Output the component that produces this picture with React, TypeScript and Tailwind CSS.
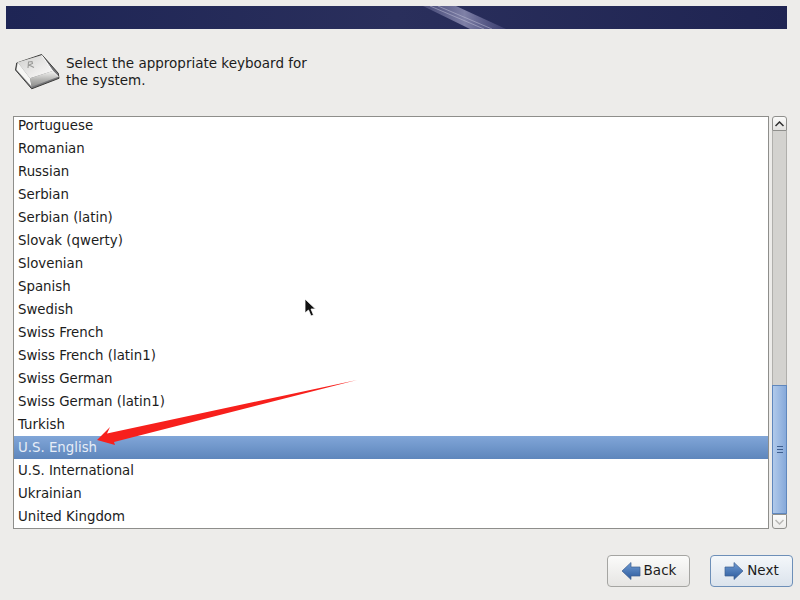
import React from 'react';

const layouts = [
  'Portuguese', 'Romanian', 'Russian', 'Serbian', 'Serbian (latin)', 'Slovak (qwerty)',
  'Slovenian', 'Spanish', 'Swedish', 'Swiss French', 'Swiss French (latin1)', 'Swiss German',
  'Swiss German (latin1)', 'Turkish', 'U.S. English', 'U.S. International', 'Ukrainian', 'United Kingdom',
];

const KeyIcon = () => (
  <svg width="46" height="36" viewBox="0 0 46 36" className="shrink-0">
    <defs>
      <linearGradient id="keyTop" x1="0" y1="0" x2="1" y2="1">
        <stop offset="0" stopColor="#cfcfcd" />
        <stop offset="0.6" stopColor="#ecebea" />
        <stop offset="1" stopColor="#fbfbfa" />
      </linearGradient>
      <linearGradient id="keyFront" x1="0" y1="0" x2="0" y2="1">
        <stop offset="0" stopColor="#f4f4f2" />
        <stop offset="0.55" stopColor="#b4b4b2" />
        <stop offset="1" stopColor="#8e8e8c" />
      </linearGradient>
    </defs>
    <path d="M1.7 9 L26.7 0.5 L43.3 19.3 L44 24.3 L16.7 34.8 L0.5 16 Z" fill="#77777a" stroke="#3c3c3a" strokeWidth="1" strokeLinejoin="round" />
    <path d="M2.7 8.2 L26.7 1.2 L37.7 17 L15 24.3 Z" fill="url(#keyTop)" />
    <path d="M2.7 8.2 L15 24.3 L16.7 32.7 L1.5 15.7 Z" fill="#f6f6f4" />
    <path d="M15 24.3 L37.7 17 L43.3 22.7 L16.7 32.7 Z" fill="url(#keyFront)" />
    <path d="M26.7 1.2 L37.7 17 L43.3 22.7" fill="none" stroke="#fff" strokeWidth="1" />
    <path d="M13 14 L13.5 8 L17 7.5 L17.5 9.5 L14 11 L19 13.5" fill="none" stroke="#9a9a98" strokeWidth="1.1" />
  </svg>
);

const NavArrow = ({ flip }: { flip?: boolean }) => (
  <svg width="20" height="20" viewBox="0 0 20 20" className={flip ? '-scale-x-100' : ''}>
    <defs>
      <linearGradient id={flip ? 'arrowN' : 'arrowB'} x1="0" y1="0" x2="0" y2="1">
        <stop offset="0" stopColor="#6f9bd3" />
        <stop offset="1" stopColor="#2c5a9c" />
      </linearGradient>
    </defs>
    <path d="M1 10 L10 1.5 L10 6 L19 6 L19 15 L10 15 L10 18.5 Z" fill={`url(#${flip ? 'arrowN' : 'arrowB'})`} stroke="#3d5f8f" strokeWidth="0.7" strokeLinejoin="round" />
  </svg>
);

const Scrollbar = () => (
  <div className="w-[15px] h-[413px] flex flex-col shrink-0">
    <div className="h-[15px] rounded-t-[3px] border border-[#8f8f8c] bg-gradient-to-b from-[#fbfbfa] to-[#e2e1df] flex items-center justify-center">
      <svg width="9" height="6" viewBox="0 0 9 6">
        <path d="M0.5 5 L4.5 1 L8.5 5" fill="none" stroke="#2e2e2e" strokeWidth="1.5" />
      </svg>
    </div>
    <div className="h-[254px] bg-[#d3d2cf] border-x border-[#b0afac]" />
    <div className="h-[129px] border border-[#5f87bd] bg-gradient-to-r from-[#b0c9ea] to-[#86a9da] flex flex-col items-center justify-center gap-[2px]">
      <div className="w-[6px] h-px bg-[#3f5f8f]" />
      <div className="w-[6px] h-px bg-[#3f5f8f]" />
      <div className="w-[6px] h-px bg-[#3f5f8f]" />
    </div>
    <div className="h-[15px] rounded-b-[3px] border border-[#8f8f8c] bg-gradient-to-b from-[#fbfbfa] to-[#eeedeb] flex items-center justify-center">
      <svg width="9" height="6" viewBox="0 0 9 6">
        <path d="M0.5 1 L4.5 5 L8.5 1" fill="none" stroke="#b9b8b5" strokeWidth="1.5" />
      </svg>
    </div>
  </div>
);

export default function App() {
  return (
    <div className="relative w-[800px] h-[600px] overflow-hidden bg-[#edecea] text-[13.5px] text-[#1c1c1c] font-['DejaVu_Sans',sans-serif]">
      {/* banner */}
      <div className="pt-[6px] pl-[6px]">
        <div className="w-[781px] h-[23px] bg-gradient-to-r from-[#1e2555] via-[#2a2f5c] via-50% to-[#1f2452] overflow-hidden">
          <svg width="781" height="23" viewBox="0 0 781 23">
            <defs>
              <linearGradient id="streak" x1="0" y1="0" x2="1" y2="0">
                <stop offset="0" stopColor="#8c8cb8" stopOpacity="0.3" />
                <stop offset="0.5" stopColor="#a5a5c8" stopOpacity="0.7" />
                <stop offset="1" stopColor="#6a6aa0" stopOpacity="0.3" />
              </linearGradient>
            </defs>
            <path d="M417 0 L450 0 L500 23 L464 23 Z" fill="url(#streak)" />
            <path d="M424 0 L478 23 M432 0 L486 23" stroke="#c4c4da" strokeWidth="1" opacity="0.5" />
          </svg>
        </div>
      </div>

      {/* heading */}
      <div className="flex items-start mt-[25px] ml-[15px] h-[62px]">
        <KeyIcon />
        <p className="ml-[5px] pt-px leading-[17px] w-[260px]">Select the appropriate keyboard for the system.</p>
      </div>

      {/* list and scrollbar */}
      <div className="flex ml-[13px] gap-[3px]">
        <div className="w-[756px] h-[413px] border border-[#8e8e8b] bg-white overflow-hidden">
          <ul className="-mt-[3px] text-[13.33px]">
            {layouts.map((name) => (
              <li
                key={name}
                className={
                  name === 'U.S. English'
                    ? 'h-[23px] leading-[23px] pl-[4px] text-[#e6edf7] bg-gradient-to-b from-[#81a6d8] to-[#5e86bc]'
                    : 'h-[23px] leading-[23px] pl-[4px]'
                }
              >
                {name}
              </li>
            ))}
          </ul>
        </div>
        <Scrollbar />
      </div>

      {/* buttons */}
      <div className="flex mt-[26px] ml-[607px] gap-[20px]">
        <button className="w-[83px] h-[32px] rounded-[4px] border border-[#a5a5a2] bg-gradient-to-b from-[#fbfbfa] to-[#e6e5e3] flex items-center justify-center gap-[3px]">
          <NavArrow />
          <span className="pb-[2px]">Back</span>
        </button>
        <button className="w-[83px] h-[32px] rounded-[4px] border border-[#6d8fb8] bg-gradient-to-b from-[#f4f7fa] to-[#dbe3ec] flex items-center justify-center gap-[3px]">
          <NavArrow flip />
          <span className="pb-[2px]">Next</span>
        </button>
      </div>

      {/* red annotation arrow */}
      <svg className="absolute left-0 top-0 pointer-events-none" width="800" height="600" viewBox="0 0 800 600">
        <path d="M357 380 L107 433.5 L110 427 L97 440 L115 445 L114 442 Z" fill="#f7201c" />
      </svg>

      {/* mouse pointer */}
      <svg className="absolute left-[304px] top-[298px]" width="13" height="20" viewBox="0 0 13 20">
        <path d="M1 1 L1 15 L4.5 12 L7 18 L9.5 17 L7 11 L11.5 11 Z" fill="#111" stroke="#fff" strokeWidth="0.8" />
      </svg>
    </div>
  );
}
